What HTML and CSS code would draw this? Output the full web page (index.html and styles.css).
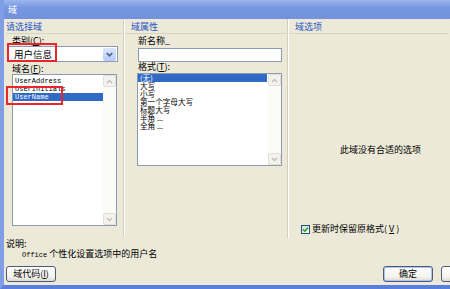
FILE: index.html
```html
<!DOCTYPE html>
<html>
<head>
  <title>域</title>
  <link rel="stylesheet" href="styles.css">
</head>
<body>
  <div class="window">
    <div class="titlebar"><span class="title">域</span></div>

    <div class="panes">
      <div class="pane pane-left">
        <div class="pane-head">请选择域</div>
        <div class="label">类别(<u>C</u>):</div>
        <div class="combo">
          <span class="combo-text">用户信息</span>
          <span class="combo-btn">
            <svg width="7" height="5" viewBox="0 0 7 5"><path d="M0.8 1 L3.5 3.8 L6.2 1" fill="none" stroke="#4d6185" stroke-width="1.6"/></svg>
          </span>
        </div>
        <div class="label">域名(<u>F</u>):</div>
        <div class="listbox list-fields">
          <div class="items mono">
            <div class="item">UserAddress</div>
            <div class="item">UserInitials</div>
            <div class="item selected">UserName</div>
          </div>
          <div class="scrollbar">
            <span class="sb-btn"><svg width="7" height="5" viewBox="0 0 7 5"><path d="M1 4 L3.5 1.5 L6 4" fill="none" stroke="#c3c0b2" stroke-width="1.4"/></svg></span>
            <span class="sb-btn"><svg width="7" height="5" viewBox="0 0 7 5"><path d="M1 1 L3.5 3.5 L6 1" fill="none" stroke="#c3c0b2" stroke-width="1.4"/></svg></span>
          </div>
        </div>
        <div class="mark mark-category"></div>
        <div class="mark mark-name"></div>
      </div>

      <div class="pane pane-mid">
        <div class="pane-head">域属性</div>
        <div class="label">新名称_</div>
        <div class="textbox"></div>
        <div class="label">格式(<u>T</u>):</div>
        <div class="listbox list-format">
          <div class="items">
            <div class="item selected">(无)</div>
            <div class="item">大写</div>
            <div class="item">小写</div>
            <div class="item">第一个字母大写</div>
            <div class="item">标题大写</div>
            <div class="item">半角 ...</div>
            <div class="item">全角 ...</div>
          </div>
          <div class="scrollbar">
            <span class="sb-btn"><svg width="7" height="5" viewBox="0 0 7 5"><path d="M1 4 L3.5 1.5 L6 4" fill="none" stroke="#c3c0b2" stroke-width="1.4"/></svg></span>
            <span class="sb-btn"><svg width="7" height="5" viewBox="0 0 7 5"><path d="M1 1 L3.5 3.5 L6 1" fill="none" stroke="#c3c0b2" stroke-width="1.4"/></svg></span>
          </div>
        </div>
      </div>

      <div class="pane pane-right">
        <div class="pane-head">域选项</div>
        <div class="options">
          <div class="no-options">此域没有合适的选项</div>
          <label class="check-row">
            <span class="checkbox">
              <svg width="7" height="7" viewBox="0 0 7 7"><path d="M1 3.4 L2.8 5.2 L6 1.6" fill="none" stroke="#21a121" stroke-width="1.6"/></svg>
            </span>
            更新时保留原格式(<u>V</u>)
          </label>
        </div>
      </div>
    </div>

    <div class="desc">
      <div class="desc-title">说明:</div>
      <div class="desc-text"><span class="en">Office</span> 个性化设置选项中的用户名</div>
    </div>

    <div class="footer">
      <button class="btn">域代码(<u>I</u>)</button>
      <button class="btn btn-default">确定</button>
      <button class="btn">取消</button>
    </div>
  </div>
</body>
</html>
```

FILE: styles.css
```css
body {
  margin: 0;
  font-family: "Noto Sans CJK SC", "Liberation Sans", sans-serif;
  font-size: 9px;
  color: #000;
}

.window {
  width: 450px;
  height: 289px;
  box-sizing: border-box;
  border-left: 4px solid #7f9ee6;
  border-bottom: 4px solid #5a7edc;
  background: #ece9d8;
  display: flex;
  flex-direction: column;
  overflow: hidden;
}

.titlebar {
  height: 19px;
  flex: none;
  margin-left: -4px;
  padding-left: 8px;
  background: linear-gradient(#9db6ef, #7797e1 40%, #7391de);
  color: #fff;
  line-height: 20px;
  font-size: 9px;
}

.panes {
  height: 219px;
  flex: none;
  display: flex;
}

.pane {
  position: relative;
  box-sizing: border-box;
  border-right: 1px solid #fff;
  box-shadow: inset -1px 0 0 #d2cebc;
}

.pane-left { width: 121px; }
.pane-mid { width: 164px; }
.pane-right { flex: 1; border-right: none; box-shadow: none; }

.pane-head {
  margin: 3px 2px 0 2px;
  height: 10px;
  line-height: 10px;
  color: #2a55c6;
  border-bottom: 1px solid #d8d4c2;
  padding-bottom: 1px;
  margin-bottom: 2px;
}

.pane-mid .pane-head,
.pane-right .pane-head {
  margin-left: 0;
  padding-left: 6px;
}

.label {
  height: 10px;
  line-height: 10px;
  margin-left: 8px;
}

.combo {
  margin: 0 0 2px 4px;
  width: 110px;
  height: 16px;
  box-sizing: border-box;
  border: 1px solid #8a9cb5;
  background: #fff;
  display: flex;
  align-items: center;
  justify-content: space-between;
}

.combo-text {
  padding-left: 5px;
  font-size: 9.5px;
  line-height: 14px;
}

.combo-btn {
  width: 13px;
  height: 13px;
  margin-right: 1px;
  border-radius: 2px;
  background: linear-gradient(#dbe6fd, #b7cbf8);
  display: flex;
  align-items: center;
  justify-content: center;
}

.listbox {
  box-sizing: border-box;
  border: 1px solid #8a9cb5;
  background: #fff;
  display: flex;
}

.list-fields {
  margin-left: 8px;
  width: 105px;
  height: 152px;
}

.items {
  flex: 1;
}

.mono {
  font-family: "Liberation Mono", "Noto Sans CJK SC", monospace;
  font-size: 7px;
}

.list-fields .items { padding-top: 2px; }

.item {
  height: 8px;
  line-height: 8px;
  padding-left: 2px;
  white-space: nowrap;
}

.item.selected {
  background: #316ac5;
  color: #fff;
}

.scrollbar {
  width: 13px;
  flex: none;
  background: #fbfbf7;
  display: flex;
  flex-direction: column;
  justify-content: space-between;
}

.sb-btn {
  height: 12px;
  box-sizing: border-box;
  border: 1px solid #e2e0d6;
  border-radius: 2px;
  background: #f3f2ec;
  display: flex;
  align-items: center;
  justify-content: center;
}

.mark {
  position: absolute;
  border: 2px solid #e8262c;
}

.mark-category { left: 3px; top: 24px; width: 46px; height: 15px; }
.mark-name { left: 2px; top: 67px; width: 53px; height: 15px; }

.pane-mid .label { margin-left: 13px; }

.textbox {
  margin: 2px 0 0 13px;
  width: 144px;
  height: 14px;
  box-sizing: border-box;
  border: 1px solid #8a9cb5;
  background: #fff;
}

.list-format {
  margin: 1px 0 0 12px;
  width: 145px;
  height: 93px;
  font-size: 7.6px;
}

.list-format .item.selected { margin-right: 1px; }

.options {
  display: flex;
  flex-direction: column;
}

.no-options {
  margin: 109px 0 0 51px;
  height: 10px;
  line-height: 10px;
}

.check-row {
  margin: 69px 0 0 12px;
  height: 10px;
  line-height: 10px;
  display: flex;
  align-items: center;
  gap: 2px;
}

.checkbox {
  width: 9px;
  height: 9px;
  box-sizing: border-box;
  border: 1px solid #1c5180;
  background: linear-gradient(135deg, #dcdcd7, #fff);
  display: flex;
  align-items: center;
  justify-content: center;
}

.desc {
  height: 20px;
  flex: none;
  padding-top: 1px;
}

.desc-title {
  height: 10px;
  line-height: 10px;
  padding-left: 2px;
}

.desc-text {
  height: 10px;
  line-height: 10px;
  padding-left: 18px;
}

.en {
  font-family: "Liberation Mono", monospace;
  font-size: 7px;
}

.footer {
  width: 491px;
  height: 26px;
  flex: none;
  box-sizing: border-box;
  padding: 7px 4px 0 2px;
  display: flex;
  align-items: flex-start;
  gap: 8px;
}

.btn {
  width: 50px;
  height: 16px;
  padding: 0;
  font-family: inherit;
  font-size: 9px;
  line-height: 14px;
  border: 1px solid #4b5b78;
  border-radius: 3px;
  background: linear-gradient(#fff, #f3f2ec 70%, #dedbcf);
  color: #000;
}

.footer .btn-default {
  margin-left: auto;
  box-shadow: inset 0 0 0 1px #a9c3f4;
}
```
